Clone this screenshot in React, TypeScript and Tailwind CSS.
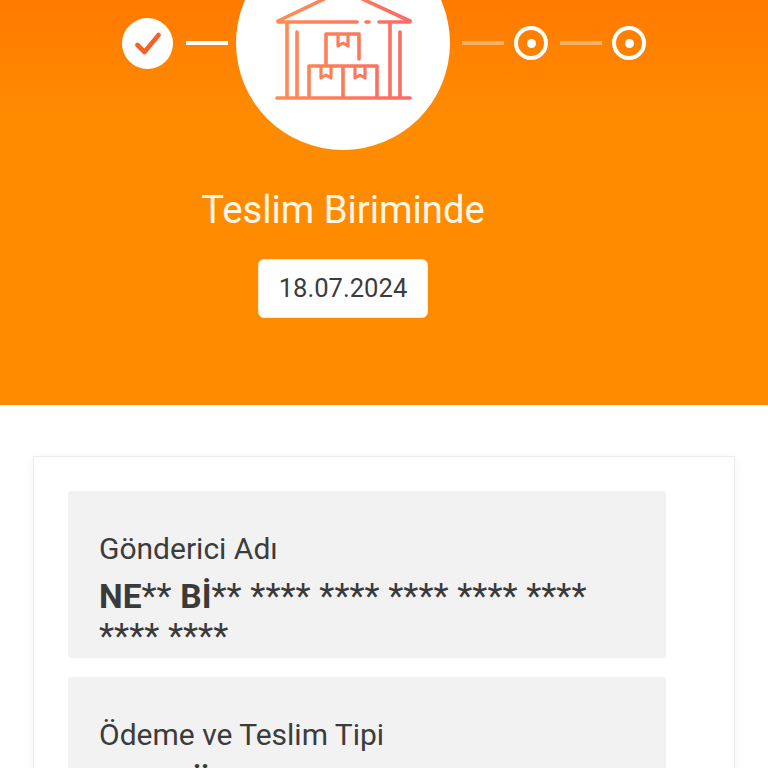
import React from "react";

const font = { fontFamily: "Roboto, sans-serif" };

// Warehouse line drawing, in a coordinate box that spans the white disc
function Warehouse() {
  return (
    <svg viewBox="236 -64 214 214" className="w-[214px] h-[214px]" fill="none">
      <defs>
        <linearGradient id="wh" gradientUnits="userSpaceOnUse" x1="276" y1="0" x2="411" y2="0">
          <stop offset="0" stopColor="#ff8c52" />
          <stop offset="1" stopColor="#fb6a66" />
        </linearGradient>
      </defs>
      <g stroke="url(#wh)" strokeWidth="3.6" strokeLinecap="round" strokeLinejoin="round">
        <path d="M278 21 L343 -10 L410 21" />
        <path d="M278 22 H357 M366 22 H369 M379 22 H410" />
        <path d="M287 23 V97 M297 32 V97 M390 23 V97 M400 32 V97" />
        <path d="M277 98 H410" />
        <path d="M326 64 V34 H359 V59" />
        <path d="M309 97 V66 H377 V97 M343 66 V97" />
        <path d="M338 35 V46 L343 43 L348 46 V35" strokeWidth="3.2" />
        <path d="M321 67 V78 L326 75 L331 78 V67" strokeWidth="3.2" />
        <path d="M355 67 V78 L360 75 L365 78 V67" strokeWidth="3.2" />
      </g>
    </svg>
  );
}

function PendingStep() {
  return (
    <div className="w-[34px] h-[34px] rounded-full border-[4px] border-white flex items-center justify-center shrink-0">
      <div className="w-[9px] h-[9px] rounded-full bg-white" />
    </div>
  );
}

function InfoBlock({ label, children }: { label: string; children: React.ReactNode }) {
  return (
    <div className="bg-[#f2f2f2] rounded-[3px] pl-[31px] pr-[40px] pt-[42px] pb-[1px]">
      <div className="text-[30px] leading-[32px] text-[#3c3c3c]">{label}</div>
      <div className="text-[35px] leading-[40px] mt-[12px] text-[#3a3a3a]">{children}</div>
    </div>
  );
}

export default function App() {
  return (
    <div className="w-[768px] h-[768px] overflow-hidden bg-white" style={font}>
      <section className="h-[405px] overflow-hidden bg-gradient-to-b from-[#ff7a00] to-[#ff8c00] to-[30%]">
        <div className="flex items-center justify-center -mt-[64px] h-[214px]">
          <div className="w-[51px] h-[51px] rounded-full bg-white flex items-center justify-center shrink-0">
            <svg viewBox="0 0 26 23" className="w-[26px] h-[23px]" fill="none">
              <path d="M2.5 13 L9.5 20 L23.5 3" stroke="#f4622a" strokeWidth="4.6" strokeLinecap="round" strokeLinejoin="round" />
            </svg>
          </div>
          <div className="w-[42px] h-[4px] bg-white ml-[13px] mr-[8px]" />
          <div className="w-[214px] h-[214px] rounded-full bg-white shrink-0">
            <Warehouse />
          </div>
          <div className="w-[42px] h-[4px] bg-[#ffb066] ml-[12px] mr-[10px]" />
          <PendingStep />
          <div className="w-[42px] h-[4px] bg-[#ffb066] ml-[12px] mr-[10px]" />
          <PendingStep />
        </div>
        <div className="w-[686px] flex flex-col items-center">
          <h1 className="mt-[38px] text-[38.2px] leading-[44px] font-normal text-[#fff6e8]">Teslim Biriminde</h1>
          <div className="mt-[27px] w-[170px] h-[59px] rounded-[6px] bg-white border border-[#ffe9cc] flex items-center justify-center text-[25.6px] text-[#3c3c3c]">
            18.07.2024
          </div>
        </div>
      </section>

      <section className="pt-[51px] pl-[33px] pr-[33px]">
        <div className="border border-[#ececec] shadow-[0_2px_10px_rgba(0,0,0,0.05)] pt-[34px] pl-[34px] pr-[68px] flex flex-col gap-[19px]">
          <InfoBlock label="Gönderici Adı">
            <span className="font-bold text-[33.5px]">NE</span>** <span className="font-bold text-[33.5px]">Bİ</span>** **** **** **** **** **** **** ****
          </InfoBlock>
          <InfoBlock label="Ödeme ve Teslim Tipi">
            <span className="font-bold text-[33.5px]">ALICI ÖDEME</span>
          </InfoBlock>
        </div>
      </section>
    </div>
  );
}
